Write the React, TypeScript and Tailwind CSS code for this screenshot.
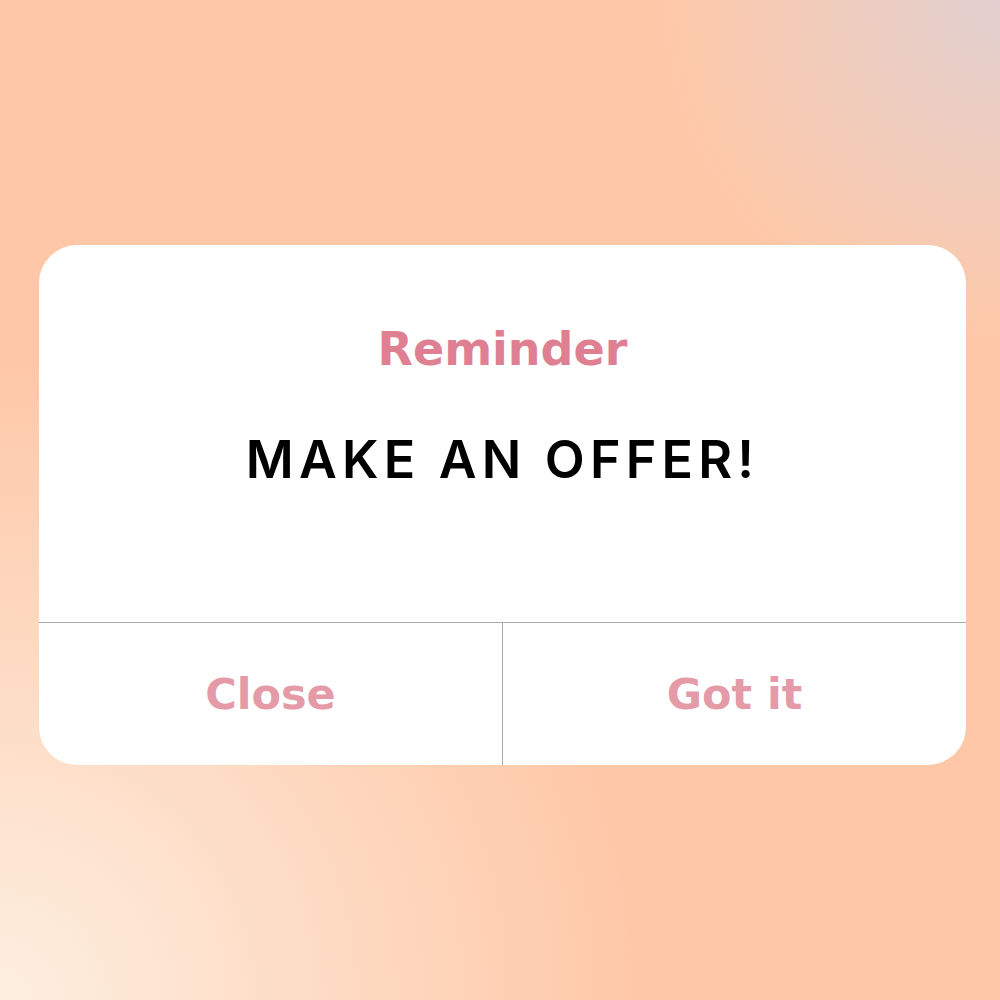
export default function App() {
  return (
    <div
      className="flex h-[1000px] w-full items-start justify-start bg-[#fec8a8] bg-[radial-gradient(circle_at_0%_100%,#fdefe0_0%,rgba(253,239,224,0)_45%),radial-gradient(circle_at_100%_0%,#e2d0d0_0%,rgba(226,207,207,0)_24%)] pl-[39px] pt-[245px]"
      style={{ fontFamily: '"DejaVu Sans", "Open Sans", sans-serif' }}
    >
      <div className="flex h-[520px] w-[927px] flex-col overflow-hidden rounded-[38px] bg-white">
        <div className="flex h-[377px] flex-col items-center pt-[76px]">
          <h2 className="text-[46px] font-bold leading-[56px] text-[#df7f92]">Reminder</h2>
          <p
            className="mt-[52px] text-[52px] font-semibold leading-[62px] tracking-[0.1em] text-black"
            style={{ fontFamily: 'Inter, "DejaVu Sans", sans-serif' }}
          >
            MAKE AN OFFER!
          </p>
        </div>
        <div className="flex flex-1 border-t border-[#a9a9a9]">
          <button className="flex flex-1 items-center justify-center border-r border-[#a9a9a9] text-[43px] font-bold text-[#e59aa8]">
            Close
          </button>
          <button className="flex flex-1 items-center justify-center text-[43px] font-bold text-[#e59aa8]">
            Got it
          </button>
        </div>
      </div>
    </div>
  )
}
